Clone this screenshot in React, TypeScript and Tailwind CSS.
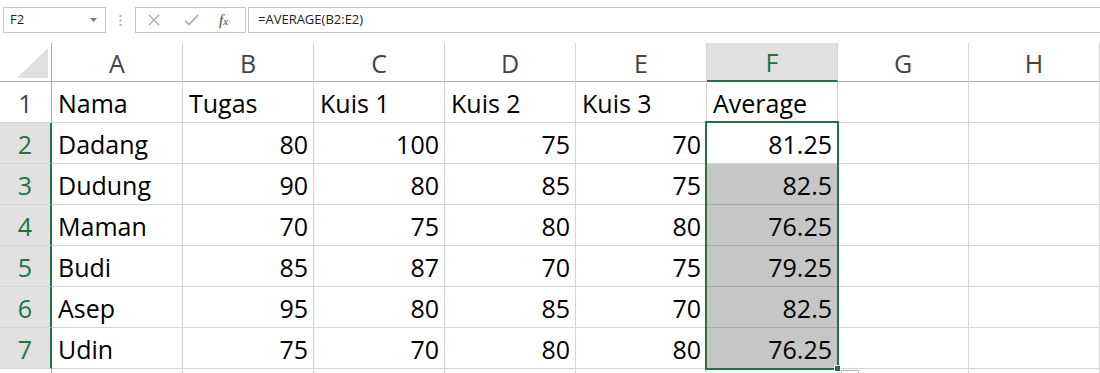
import React from 'react';

const cols = ['A', 'B', 'C', 'D', 'E', 'F', 'G', 'H'];

type Row = { n: number; cells: (string | number | null)[] };

const rows: Row[] = [
  { n: 1, cells: ['Nama', 'Tugas', 'Kuis 1', 'Kuis 2', 'Kuis 3', 'Average', null, null] },
  { n: 2, cells: ['Dadang', 80, 100, 75, 70, '81.25', null, null] },
  { n: 3, cells: ['Dudung', 90, 80, 85, 75, '82.5', null, null] },
  { n: 4, cells: ['Maman', 70, 75, 80, 80, '76.25', null, null] },
  { n: 5, cells: ['Budi', 85, 87, 70, 75, '79.25', null, null] },
  { n: 6, cells: ['Asep', 95, 80, 85, 70, '82.5', null, null] },
  { n: 7, cells: ['Udin', 75, 70, 80, 80, '76.25', null, null] },
];

function FormulaBar() {
  return (
    <div className="h-[43px] flex items-start pt-[7px] font-['Open_Sans',sans-serif]">
      <div className="ml-[3px] w-[103px] h-[26px] border border-[#c6c6c6] bg-white flex items-center justify-between pl-[6px] pr-[8px]">
        <span className="text-[13px] text-[#222]">F2</span>
        <svg width="7" height="4" viewBox="0 0 7 4">
          <path d="M0 0 L7 0 L3.5 4 Z" fill="#7a7a7a" />
        </svg>
      </div>
      <div className="w-[29px] h-[26px] flex items-center justify-center">
        <svg width="3" height="11" viewBox="0 0 3 11">
          <rect x="0.5" y="0" width="2" height="2" fill="#b4b4b4" />
          <rect x="0.5" y="4.5" width="2" height="2" fill="#b4b4b4" />
          <rect x="0.5" y="9" width="2" height="2" fill="#b4b4b4" />
        </svg>
      </div>
      <div className="w-[111px] h-[26px] border border-[#c6c6c6] bg-white flex items-center pl-[12px]">
        <svg width="12" height="12" viewBox="0 0 12 12">
          <path d="M1 1 L11 11 M11 1 L1 11" stroke="#a8a8a8" strokeWidth="1.3" />
        </svg>
        <svg className="ml-[24px]" width="15" height="12" viewBox="0 0 15 12">
          <path d="M1 6.5 L5 10.5 L14 1" stroke="#a8a8a8" strokeWidth="1.6" fill="none" />
        </svg>
        <span className="ml-[20px] font-['Liberation_Serif',serif] italic text-[15px] text-[#444] leading-none">
          f<span className="text-[11px]">x</span>
        </span>
      </div>
      <div className="ml-[2px] flex-1 h-[26px] border border-r-0 border-[#c6c6c6] bg-white flex items-center pl-[9px]">
        <span className="text-[13px] text-[#222]">=AVERAGE(B2:E2)</span>
      </div>
    </div>
  );
}

function ColumnHeader() {
  return (
    <div className="flex h-[39px]">
      <div className="w-[52px] shrink-0 border-r border-b border-[#ababab] flex items-end justify-end pr-[3px] pb-[3px]">
        <svg width="31" height="30" viewBox="0 0 31 30">
          <polygon points="0,30 31,30 31,0" fill="#dfdfdf" />
        </svg>
      </div>
      {cols.map((c) => {
        const sel = c === 'F';
        return (
          <div
            key={c}
            className={`w-[131px] shrink-0 border-r border-[#d4d4d4] flex items-center justify-center text-[25px] pt-[3px] ${
              sel ? 'bg-[#e1e1e1] text-[#217346] border-b-2 border-b-[#217346]' : 'text-[#444] border-b border-b-[#ababab]'
            }`}
          >
            {c}
          </div>
        );
      })}
    </div>
  );
}

function DataRow({ row }: { row: Row }) {
  const selRow = row.n >= 2;
  return (
    <div className="flex h-[41px]">
      <div
        className={`w-[52px] shrink-0 border-b border-[#d4d4d4] flex items-center justify-center text-[25px] pt-[3px] ${
          selRow ? 'bg-[#e1e1e1] text-[#217346] border-r-2 border-r-[#217346]' : 'bg-white text-[#444] border-r border-r-[#ababab]'
        }`}
      >
        {row.n}
      </div>
      {row.cells.map((v, i) => {
        const isNum = typeof v === 'number' || (i === 5 && row.n >= 2);
        const shaded = i === 5 && row.n >= 3;
        return (
          <div
            key={i}
            className={`w-[131px] shrink-0 border-r border-b flex items-center text-[25px] text-black pt-[3px] ${
              isNum ? 'justify-end pr-[5px]' : 'justify-start pl-[6px]'
            } ${shaded ? 'bg-[#c6c6c6] border-[#ababab]' : 'bg-white border-[#d4d4d4]'}`}
          >
            {v}
          </div>
        );
      })}
    </div>
  );
}

export default function App() {
  return (
    <div className="relative w-[1100px] h-[373px] bg-white overflow-hidden font-['Open_Sans',sans-serif]">
      <FormulaBar />
      <ColumnHeader />
      {rows.map((r) => (
        <DataRow key={r.n} row={r} />
      ))}
      <div className="flex h-[41px]">
        <div className="w-[52px] shrink-0 border-r border-[#ababab]" />
        {cols.map((c) => (
          <div key={c} className="w-[131px] shrink-0 border-r border-[#d4d4d4]" />
        ))}
      </div>

      {/* selection F2:F7 */}
      <div className="absolute left-[705px] top-[121px] w-[134px] h-[249px] border-2 border-[#217346] pointer-events-none" />
      <div className="absolute left-[834px] top-[365px] w-[7px] h-[7px] bg-[#217346] border border-white" />
      <div className="absolute left-[841px] top-[370px] w-[18px] h-[10px] border border-[#b4b4b4] bg-white" />
    </div>
  );
}
